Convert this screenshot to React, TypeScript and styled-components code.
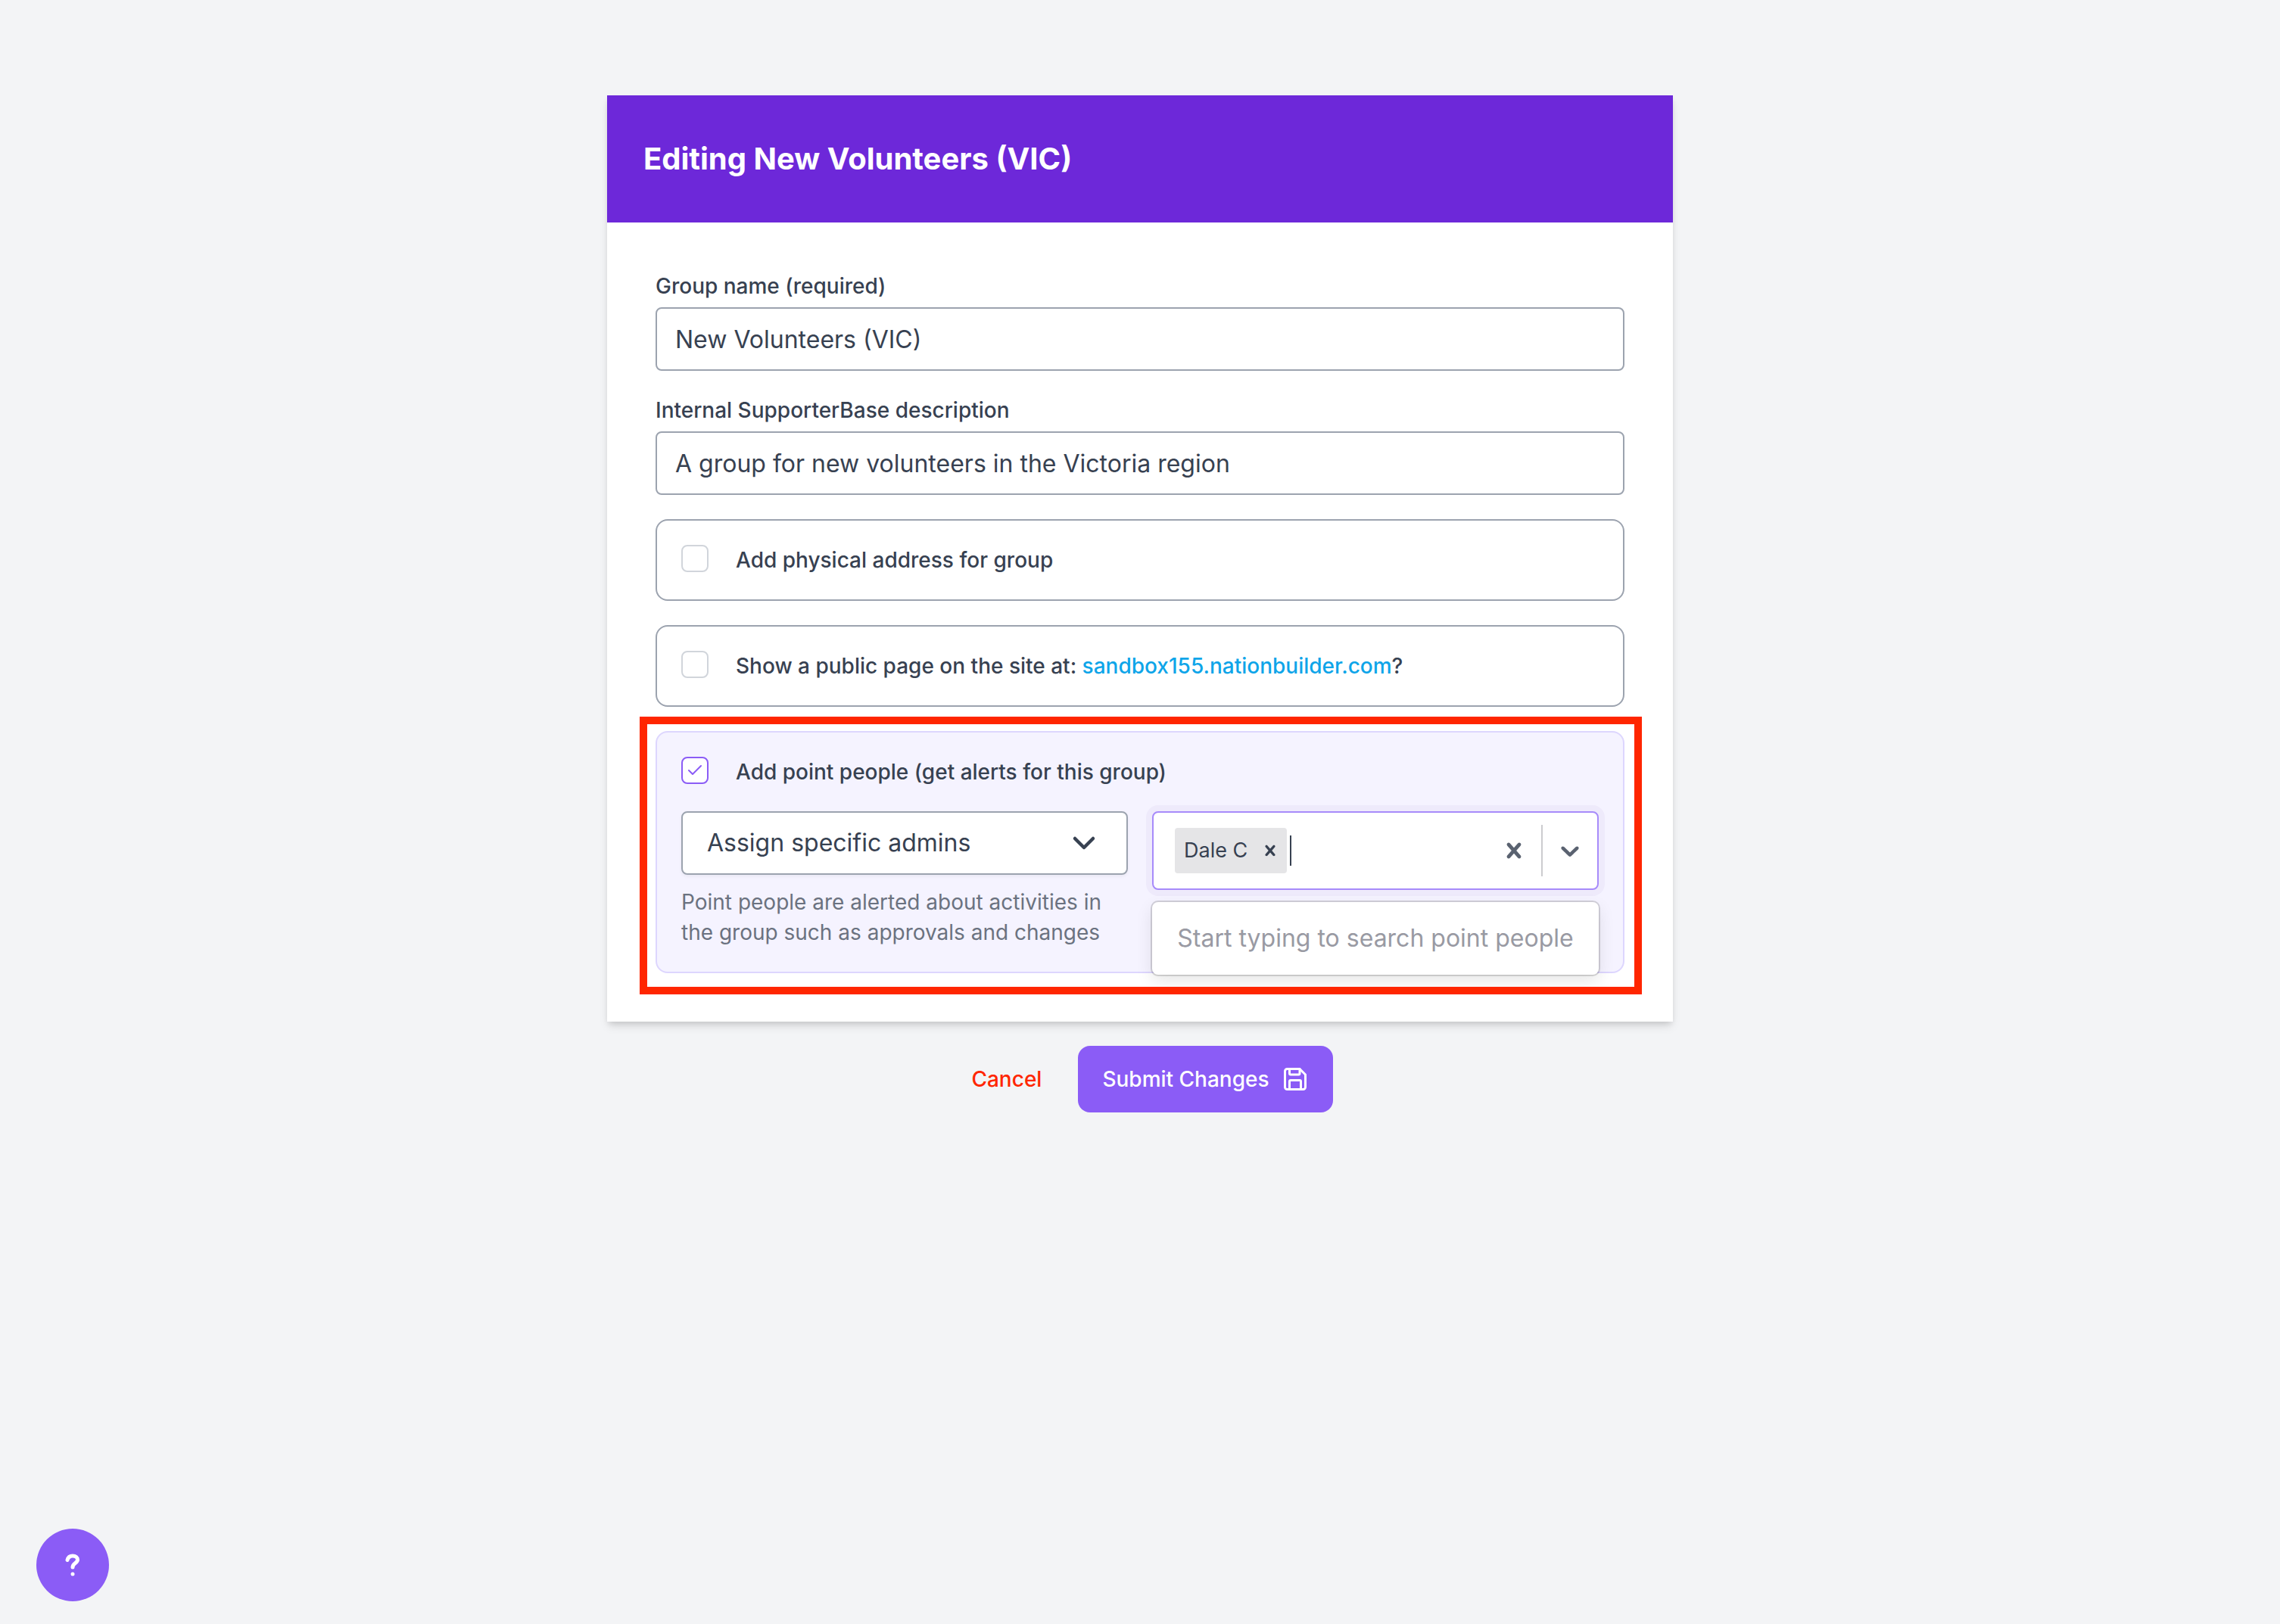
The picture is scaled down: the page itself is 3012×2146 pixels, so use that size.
import React, { useState } from "react";
import styled, { createGlobalStyle } from "styled-components";

const color = {
  page: "#f3f4f6",
  header: "#6d28d9",
  accent: "#8b5cf6",
  accentBorder: "#a78bfa",
  accentLine: "#ddd6fe",
  accentSoft: "#f5f3ff",
  line: "#9ca3af",
  lineSoft: "#d1d5db",
  text: "#374151",
  muted: "#6b7280",
  link: "#0ea5e9",
  danger: "#ff2600",
};

const GlobalStyle = createGlobalStyle`
  *, *::before, *::after { box-sizing: border-box; }
  body {
    margin: 0;
    background: ${color.page};
    color: ${color.text};
    font-family: Inter, "Liberation Sans", sans-serif;
    font-size: 28px;
    line-height: 40px;
  }
  button, input, select { font: inherit; color: inherit; }
`;

const Page = styled.main`
  min-height: 100vh;
  padding: 126px 32px 64px;
`;

const Form = styled.form`
  display: flex;
  flex-direction: column;
  gap: 32px;
  width: 100%;
  max-width: 1408px;
  margin: 0 auto;
`;

const Card = styled.section`
  background: #fff;
  box-shadow: 0 8px 12px -2px rgba(0, 0, 0, 0.1), 0 4px 8px -2px rgba(0, 0, 0, 0.12);
`;

const CardHeader = styled.header`
  padding: 48px;
  background: ${color.header};
`;

const Title = styled.h1`
  margin: 0;
  color: #fff;
  font-size: 40px;
  font-weight: 700;
  line-height: 72px;
`;

const CardBody = styled.div`
  display: flex;
  flex-direction: column;
  gap: 32px;
  padding: 64px;
`;

const Field = styled.div`
  display: flex;
  flex-direction: column;
  gap: 8px;
`;

const Label = styled.label`
  font-weight: 500;
`;

const TextInput = styled.input`
  width: 100%;
  height: 84px;
  padding: 0 24px;
  border: 2px solid ${color.line};
  border-radius: 8px;
  background: #fff;
  font-size: 32px;
  outline: none;
`;

const Option = styled.div<{ $active?: boolean }>`
  position: relative;
  display: flex;
  flex-direction: column;
  gap: 32px;
  padding: 32px;
  border: 2px solid ${(p) => (p.$active ? color.accentLine : color.line)};
  border-radius: 16px;
  background: ${(p) => (p.$active ? color.accentSoft : "#fff")};
`;

const OptionHead = styled.div`
  display: flex;
  align-items: flex-start;
  gap: 36px;
`;

const CheckSlot = styled.span`
  display: grid;
  width: 36px;
  height: 36px;
  flex: none;

  > * { grid-area: 1 / 1; }
`;

const Checkbox = styled.input`
  appearance: none;
  width: 36px;
  height: 36px;
  margin: 0;
  border: 2px solid ${color.lineSoft};
  border-radius: 8px;
  background: #fff;

  &:checked { border-color: ${color.accent}; }
`;

const CheckMark = styled.svg`
  place-self: center;
  width: 20px;
  height: 20px;
  color: ${color.accent};
  pointer-events: none;
`;

const SiteLink = styled.a`
  color: ${color.link};
  text-decoration: none;
`;

const Columns = styled.div`
  display: grid;
  grid-template-columns: repeat(2, minmax(0, 1fr));
  align-items: start;
  gap: 32px;
`;

const Assign = styled.div`
  display: flex;
  flex-direction: column;
  gap: 16px;
`;

const SelectBox = styled.div`
  display: grid;
  align-items: center;

  > * { grid-area: 1 / 1; }
`;

const Select = styled.select`
  appearance: none;
  width: 100%;
  height: 84px;
  padding: 0 96px 0 32px;
  border: 2px solid ${color.line};
  border-radius: 8px;
  background: #fff;
  box-shadow: 0 2px 4px rgba(0, 0, 0, 0.05);
  font-size: 32px;
  outline: none;
`;

const SelectChevron = styled.svg`
  justify-self: end;
  width: 60px;
  height: 60px;
  margin-right: 28px;
  pointer-events: none;
`;

const Hint = styled.p`
  margin: 0;
  color: ${color.muted};
`;

const Combo = styled.div`
  position: relative;
`;

const ComboControl = styled.div`
  display: flex;
  align-items: center;
  height: 104px;
  padding-left: 28px;
  border: 2px solid ${color.accentBorder};
  border-radius: 8px;
  background: #fff;
  box-shadow: 0 0 0 8px rgba(76, 29, 149, 0.04);
`;

const Tag = styled.span`
  display: flex;
  flex: none;
  align-items: center;
  gap: 16px;
  height: 60px;
  padding: 0 8px 0 12px;
  border-radius: 4px;
  background: #e5e5e7;
  font-size: 27px;
`;

const IconButton = styled.button<{ $size: number; $pad: number }>`
  display: flex;
  flex: none;
  padding: ${(p) => p.$pad}px;
  border: 0;
  background: none;

  svg {
    width: ${(p) => p.$size}px;
    height: ${(p) => p.$size}px;
    fill: currentColor;
  }
`;

const Indicators = styled.div`
  display: flex;
  align-self: stretch;
  align-items: center;
  color: #5a6270;
`;

const Separator = styled.span`
  align-self: stretch;
  width: 2px;
  margin: 16px 0;
  background: #cccccf;
`;

const Caret = styled.span`
  flex: none;
  width: 2px;
  height: 40px;
  margin-left: 4px;
  background: ${color.text};
`;

const SearchInput = styled.input`
  flex: 1;
  min-width: 0;
  height: 60px;
  padding: 0;
  border: 0;
  background: none;
  caret-color: transparent;
  outline: none;
`;

const Menu = styled.div`
  position: absolute;
  top: 100%;
  left: 0;
  right: 0;
  margin-top: 16px;
  padding: 24px;
  border-radius: 8px;
  background: #fff;
  box-shadow: 0 0 0 2px rgba(0, 0, 0, 0.15), 0 8px 22px rgba(0, 0, 0, 0.1);
  color: #999aa3;
  font-size: 32px;
  line-height: 48px;
  text-align: center;
  white-space: nowrap;
`;

const Highlight = styled.div`
  position: absolute;
  inset: -21px -25px -30px -23px;
  border: 10px solid #ff2600;
  pointer-events: none;
`;

const Actions = styled.div`
  display: flex;
  align-items: center;
  justify-content: center;
  gap: 16px;
`;

const CancelButton = styled.button`
  padding: 24px 32px;
  border: 0;
  background: none;
  color: ${color.danger};
  font-weight: 500;
`;

const SubmitButton = styled.button`
  display: flex;
  align-items: center;
  gap: 16px;
  padding: 24px 32px;
  border: 0;
  border-radius: 16px;
  background: ${color.accent};
  color: #fff;
  font-weight: 500;
`;

const HelpButton = styled.button`
  position: fixed;
  left: 48px;
  bottom: 30px;
  display: grid;
  place-items: center;
  width: 96px;
  height: 96px;
  padding: 0;
  border: 0;
  border-radius: 50%;
  background: ${color.accent};
  color: #fff;
`;

const CloseIcon = () => (
  <svg viewBox="0 0 20 20" aria-hidden="true">
    <path d="M14.348 14.849c-0.469 0.469-1.229 0.469-1.697 0l-2.651-3.030-2.651 3.029c-0.469 0.469-1.229 0.469-1.697 0-0.469-0.469-0.469-1.229 0-1.697l2.758-3.15-2.759-3.152c-0.469-0.469-0.469-1.228 0-1.697s1.228-0.469 1.697 0l2.652 3.031 2.651-3.031c0.469-0.469 1.228-0.469 1.697 0s0.469 1.229 0 1.697l-2.758 3.152 2.758 3.15c0.469 0.469 0.469 1.229 0 1.698z" />
  </svg>
);

const DownIcon = () => (
  <svg viewBox="0 0 20 20" aria-hidden="true">
    <path d="M4.516 7.548c0.436-0.446 1.043-0.481 1.576 0l3.908 3.747 3.908-3.747c0.533-0.481 1.141-0.446 1.574 0 0.436 0.445 0.408 1.197 0 1.615-0.406 0.418-4.695 4.502-4.695 4.502-0.217 0.223-0.502 0.335-0.787 0.335s-0.57-0.112-0.789-0.335c0 0-4.287-4.084-4.695-4.502s-0.436-1.17 0-1.615z" />
  </svg>
);

const SaveIcon = () => (
  <svg width="36" height="36" viewBox="0 0 24 24" fill="none" stroke="currentColor" strokeWidth="2" strokeLinecap="round" strokeLinejoin="round" aria-hidden="true">
    <path d="M5 3h11l5 5v11a2 2 0 0 1-2 2H5a2 2 0 0 1-2-2V5a2 2 0 0 1 2-2z" />
    <path d="M17 21v-7a1 1 0 0 0-1-1H8a1 1 0 0 0-1 1v7" />
    <path d="M7 3v4a1 1 0 0 0 1 1h7a1 1 0 0 0 1-1V3" />
  </svg>
);

type CheckOptionProps = {
  id: string;
  label: React.ReactNode;
  initial?: boolean;
  children?: React.ReactNode;
};

function CheckOption({ id, label, initial = false, children }: CheckOptionProps) {
  const [checked, setChecked] = useState(initial);
  return (
    <Option $active={checked}>
      <OptionHead>
        <CheckSlot>
          <Checkbox id={id} type="checkbox" checked={checked} onChange={(e) => setChecked(e.target.checked)} />
          {checked && (
            <CheckMark viewBox="0 0 20 20" fill="none" stroke="currentColor" strokeWidth="2" strokeLinecap="round" strokeLinejoin="round" aria-hidden="true">
              <path d="M2 10l5 5L18 4" />
            </CheckMark>
          )}
        </CheckSlot>
        <Label htmlFor={id}>{label}</Label>
      </OptionHead>
      {checked && children}
    </Option>
  );
}

export default function App() {
  return (
    <Page>
      <GlobalStyle />
      <Form onSubmit={(e) => e.preventDefault()}>
        <Card>
          <CardHeader>
            <Title>Editing New Volunteers (VIC)</Title>
          </CardHeader>
          <CardBody>
            <Field>
              <Label htmlFor="name">Group name (required)</Label>
              <TextInput id="name" type="text" required defaultValue="New Volunteers (VIC)" />
            </Field>
            <Field>
              <Label htmlFor="description">Internal SupporterBase description</Label>
              <TextInput id="description" type="text" defaultValue="A group for new volunteers in the Victoria region" />
            </Field>
            <CheckOption id="address" label="Add physical address for group" />
            <CheckOption
              id="public"
              label={
                <>
                  Show a public page on the site at: <SiteLink href="#site">sandbox155.nationbuilder.com</SiteLink>?
                </>
              }
            />
            <CheckOption id="point-people" label="Add point people (get alerts for this group)" initial>
              <Columns>
                <Assign>
                  <SelectBox>
                    <Select aria-label="Point people assignment" aria-describedby="assign-hint">
                      <option>Assign specific admins</option>
                    </Select>
                    <SelectChevron viewBox="0 0 20 20" fill="none" stroke="currentColor" strokeWidth="1.5" strokeLinecap="round" strokeLinejoin="round" aria-hidden="true">
                      <path d="M6 8l4 4 4-4" />
                    </SelectChevron>
                  </SelectBox>
                  <Hint id="assign-hint">Point people are alerted about activities in the group such as approvals and changes</Hint>
                </Assign>
                <Combo>
                  <ComboControl>
                    <Tag>
                      Dale C
                      <IconButton type="button" $size={28} $pad={0} aria-label="Remove Dale C">
                        <CloseIcon />
                      </IconButton>
                    </Tag>
                    <Caret />
                    <SearchInput type="text" aria-label="Search point people" />
                    <Indicators>
                      <IconButton type="button" $size={40} $pad={16} aria-label="Clear all">
                        <CloseIcon />
                      </IconButton>
                      <Separator />
                      <IconButton type="button" $size={40} $pad={16} aria-label="Open list">
                        <DownIcon />
                      </IconButton>
                    </Indicators>
                  </ComboControl>
                  <Menu>Start typing to search point people</Menu>
                </Combo>
              </Columns>
              <Highlight />
            </CheckOption>
          </CardBody>
        </Card>
        <Actions>
          <CancelButton type="button">Cancel</CancelButton>
          <SubmitButton type="submit">
            Submit Changes
            <SaveIcon />
          </SubmitButton>
        </Actions>
      </Form>
      <HelpButton type="button" aria-label="Help">
        <svg width="20" height="30" viewBox="0 0 20 30" fill="none" stroke="currentColor" strokeWidth="5" strokeLinecap="round" strokeLinejoin="round" aria-hidden="true">
          <path d="M3 8.500C4 4.500 6 3 10 3c4 0 6.500 2 6.500 5 0 4.500-6.500 4.500-6.500 10" />
          <circle cx="10" cy="27" r="2.500" fill="currentColor" stroke="none" />
        </svg>
      </HelpButton>
    </Page>
  );
}
